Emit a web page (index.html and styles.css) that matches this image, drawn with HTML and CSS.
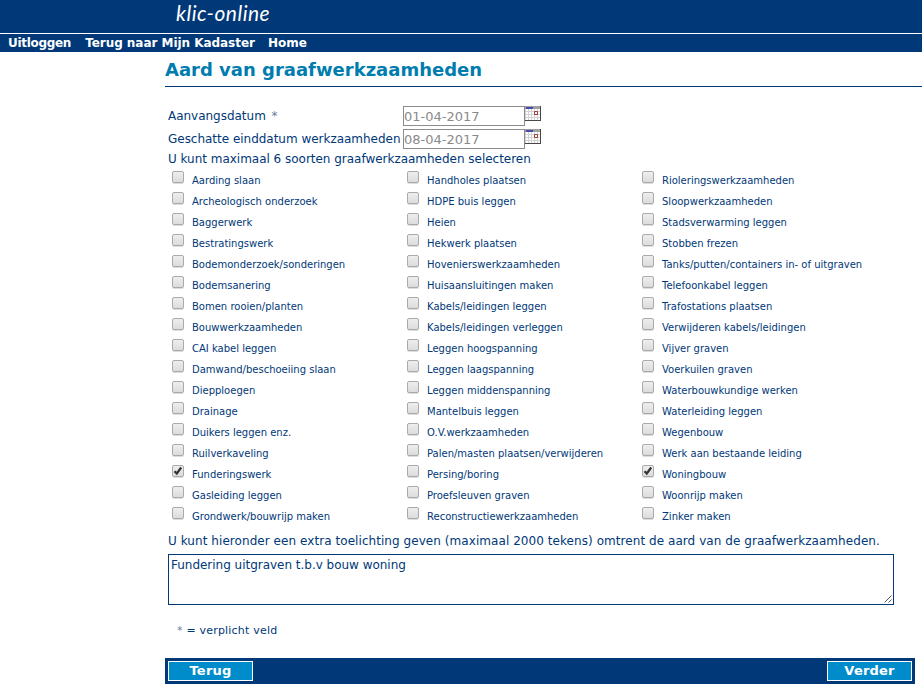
FILE: index.html
```
<!DOCTYPE html>
<html lang="nl">
<head>
<meta charset="utf-8">
<title>klic-online</title>
<link rel="stylesheet" href="styles.css">
</head>
<body>
<svg width="0" height="0" class="defs">
  <symbol id="calendar" viewBox="0 0 16 15">
    <path fill="#d2d2d2" d="M0 0h16v15H0z"/>
    <path fill="#fff" d="M1 3h2v2H1zM4 3h2v2H4zM7 3h2v2H7zM10 3h2v2h-2zM13 3h2v2h-2zM1 6h2v2H1zM4 6h2v2H4zM7 6h2v2H7zM13 6h2v2h-2zM1 9h2v2H1zM4 9h2v2H4zM7 9h2v2H7zM10 9h2v2h-2zM13 9h2v2h-2zM1 12h2v2H1zM4 12h2v2H4zM7 12h2v2H7zM10 12h2v2h-2zM13 12h2v2h-2z"/>
    <path fill="#a0a0a0" d="M0 0h15v3H0z"/>
    <path fill="#444bb0" d="M1 1h7v2H1z"/>
    <path fill="#fff" stroke="#a33b3b" d="M9.500 5.500h3v3h-3z"/>
    <path fill="#484848" d="M15 0h1v15H0v-1h15z"/>
  </symbol>
</svg>
<header class="brand"><span class="logo">klic-online</span></header>
<nav class="nav"><a class="logout">Uitloggen</a><a class="back">Terug naar Mijn Kadaster</a><a>Home</a></nav>
<main class="content">
  <h1>Aard van graafwerkzaamheden</h1>
  <div class="field"><label class="text">Aanvangsdatum <i class="star">*</i></label><input type="text" value="01-04-2017" disabled><svg class="cal"><use href="#calendar"/></svg></div>
  <div class="field"><label class="text">Geschatte einddatum werkzaamheden</label><input type="text" value="08-04-2017" disabled><svg class="cal"><use href="#calendar"/></svg></div>
  <p class="text hint">U kunt maximaal 6 soorten graafwerkzaamheden selecteren</p>
  <div class="options" id="options"></div>
  <p class="text note">U kunt hieronder een extra toelichting geven (maximaal 2000 tekens) omtrent de aard van de graafwerkzaamheden.</p>
  <div class="textbox text">Fundering uitgraven t.b.v bouw woning<svg class="grip" width="8" height="8" viewBox="0 0 8 8"><path d="M.5 7.500l7-7M4.500 7.500l3-3" stroke="#555" fill="none"/></svg></div>
  <p class="required"><i>*</i> = verplicht veld</p>
  <footer class="actions"><button>Terug</button><button>Verder</button></footer>
</main>
<script src="options.js"></script>
</body>
</html>
```
FILE: styles.css
```
* { box-sizing: border-box; }
body { margin: 0; width: 922px; height: 692px; overflow: hidden; background: #fff; color: #003878; font-family: Verdana, "DejaVu Sans", sans-serif; }
p, h1 { margin: 0; white-space: nowrap; }
i { font-style: normal; color: #667f9f; }
.star { margin-left: 2px; }
.defs { position: absolute; }
.brand { height: 33px; background: #003878; padding-left: 176px; }
.logo { display: block; width: 130px; font: italic 400 21.500px/26px Lato, sans-serif; letter-spacing: .5px; color: #fff; transform-origin: 0 0; transform: scaleX(.975); white-space: nowrap; }
.nav { height: 19px; border-top: 1px solid #fff; background: #003878; padding-left: 8px; display: flex; gap: 14px; font-size: 12px; font-weight: bold; line-height: 19px; color: #fff; white-space: nowrap; }
.logout { letter-spacing: -.3px; }
.back { letter-spacing: -.04px; margin-right: -1px; }
.content { margin-left: 165px; }
h1 { height: 35px; margin-bottom: 19px; border-bottom: 1px solid #003878; color: #007dae; font-size: 18px; line-height: 35px; }
.text { font-size: 12px; letter-spacing: -.02px; white-space: nowrap; }
.field { display: flex; height: 23px; padding-left: 3px; }
.field label { width: 235px; line-height: 20px; }
.field input { width: 122px; height: 20px; padding: 1px 0 0; border: 1px solid #8c8c8c; background: #fff; color: #8a8a8a; font: 13px "DejaVu Sans", sans-serif; }
.cal { width: 16px; height: 15px; }
.hint { padding-left: 3px; height: 19px; line-height: 14px; }
.options { display: grid; grid-template-columns: repeat(3, 235px); grid-auto-flow: column; grid-template-rows: repeat(17, 21px); padding-left: 7px; }
.option { display: flex; gap: 8px; font-size: 10px; line-height: 19px; white-space: nowrap; }
.box { width: 12px; height: 12px; border: 1px solid #aaa; border-radius: 2px; background: linear-gradient(#eee, #dcdcdc); box-shadow: 0 1px 0 #ddd; }
.box svg { display: block; width: 10px; height: 10px; }
.note { padding-left: 3px; height: 20px; line-height: 14px; margin-top: 6px; letter-spacing: .06px; }
.textbox { position: relative; width: 726px; height: 51px; margin-left: 3px; border: 1px solid #003878; padding: 3px 2px; line-height: 14px; }
.grip { position: absolute; right: 1px; bottom: 1px; }
.required { margin-top: 17px; padding-left: 12px; height: 36px; font-size: 11px; line-height: 17px; letter-spacing: .2px; }
.actions { display: flex; justify-content: space-between; width: 750px; height: 26px; padding: 3px; background: #003878; }
.actions button { width: 85px; height: 20px; padding: 0; border: 1px solid #fff; background: #008ccb; color: #fff; font: bold 13px/18px "DejaVu Sans", sans-serif; letter-spacing: .2px; }
```
FILE: options.js
```
const columns = [
  ["Aarding slaan", "Archeologisch onderzoek", "Baggerwerk", "Bestratingswerk", "Bodemonderzoek/sonderingen", "Bodemsanering", "Bomen rooien/planten", "Bouwwerkzaamheden", "CAI kabel leggen", "Damwand/beschoeiing slaan", "Diepploegen", "Drainage", "Duikers leggen enz.", "Ruilverkaveling", "Funderingswerk", "Gasleiding leggen", "Grondwerk/bouwrijp maken"],
  ["Handholes plaatsen", "HDPE buis leggen", "Heien", "Hekwerk plaatsen", "Hovenierswerkzaamheden", "Huisaansluitingen maken", "Kabels/leidingen leggen", "Kabels/leidingen verleggen", "Leggen hoogspanning", "Leggen laagspanning", "Leggen middenspanning", "Mantelbuis leggen", "O.V.werkzaamheden", "Palen/masten plaatsen/verwijderen", "Persing/boring", "Proefsleuven graven", "Reconstructiewerkzaamheden"],
  ["Rioleringswerkzaamheden", "Sloopwerkzaamheden", "Stadsverwarming leggen", "Stobben frezen", "Tanks/putten/containers in- of uitgraven", "Telefoonkabel leggen", "Trafostations plaatsen", "Verwijderen kabels/leidingen", "Vijver graven", "Voerkuilen graven", "Waterbouwkundige werken", "Waterleiding leggen", "Wegenbouw", "Werk aan bestaande leiding", "Woningbouw", "Woonrijp maken", "Zinker maken"]
];
const checked = ["Funderingswerk", "Woningbouw"];
const tick = '<svg viewBox="0 0 10 10"><path d="M1.500 5.200l2.300 2.300 4.400-6" fill="none" stroke="#333" stroke-width="2.200"/></svg>';
document.getElementById("options").innerHTML = columns.flat().map(name =>
  `<label class="option"><span class="box">${checked.includes(name) ? tick : ""}</span><span>${name}</span></label>`
).join("");
```
